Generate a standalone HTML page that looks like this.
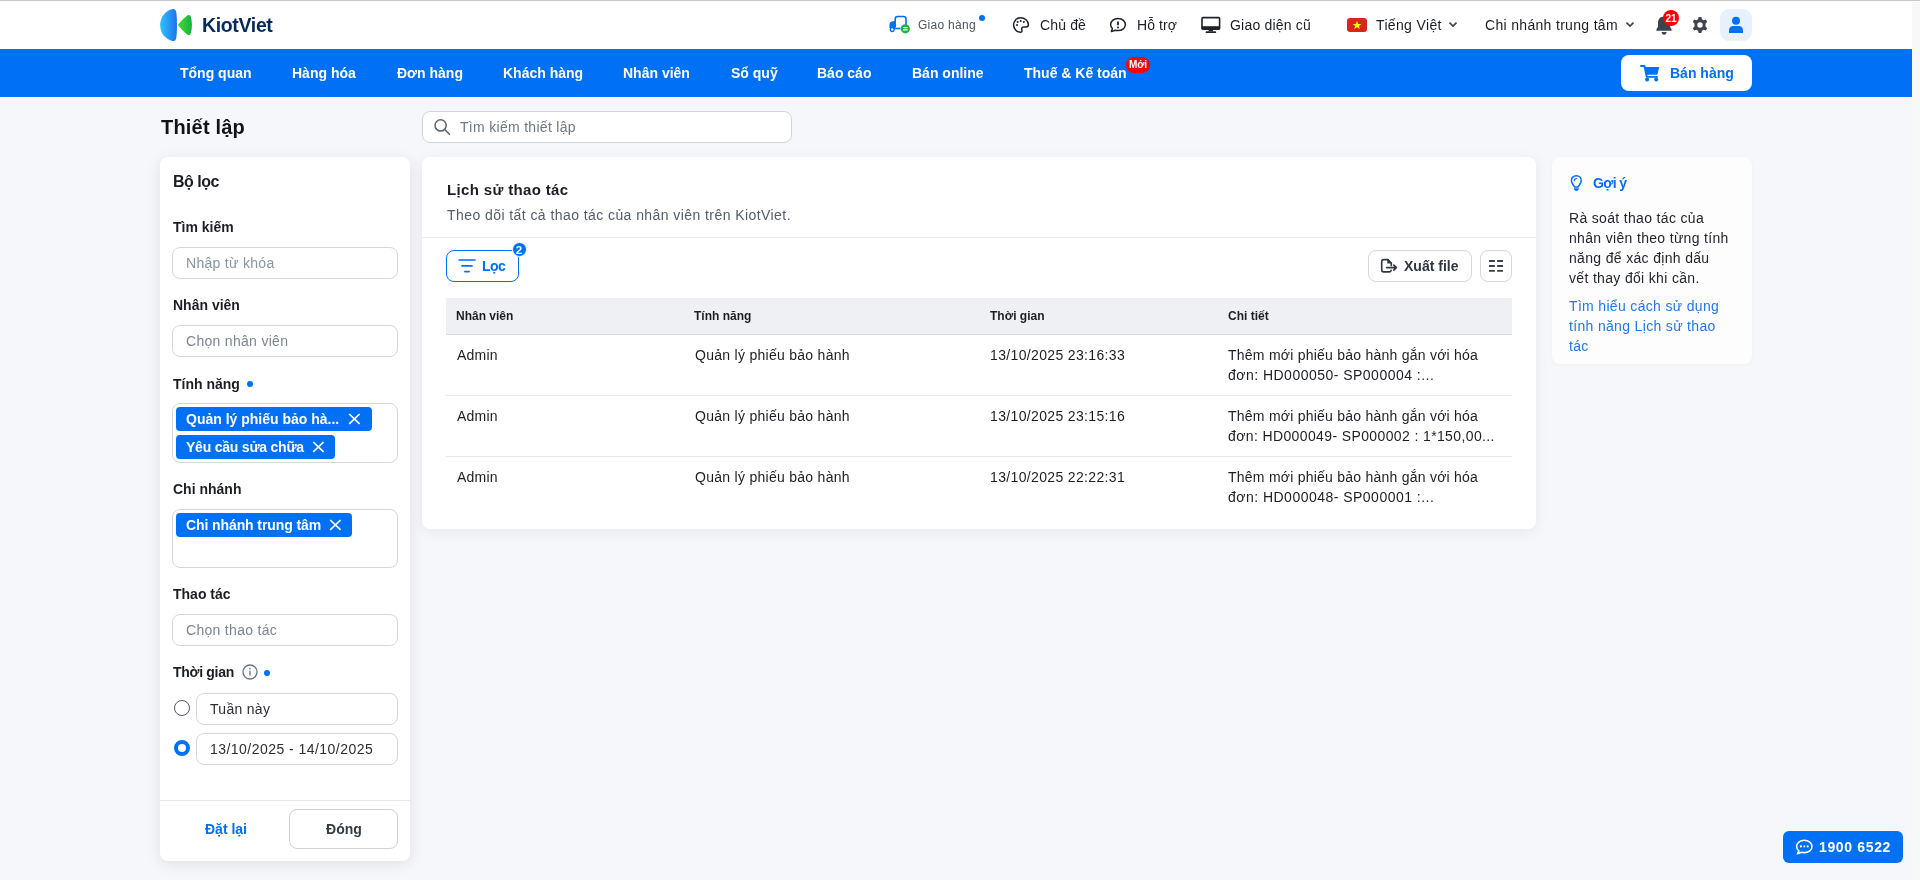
<!DOCTYPE html>
<html lang="vi"><head><meta charset="utf-8"><title>KiotViet - Lịch sử thao tác</title>
<style>
html,body{margin:0;padding:0;width:1920px;height:880px;overflow:hidden;font-family:"Liberation Sans", sans-serif;}
.t{position:absolute;white-space:nowrap;will-change:transform;}
.b{position:absolute;}
</style></head><body>
<div class="b" style="left:0px;top:0px;width:1920px;height:880px;background:#f6f7fa"></div>
<div class="b" style="left:0px;top:0px;width:1920px;height:1px;background:#c8c9c9"></div>
<div class="b" style="left:0px;top:1px;width:1912px;height:48px;background:#ffffff"></div>
<div class="b" style="left:0px;top:49px;width:1912px;height:48px;background:#0070f4"></div>
<div class="b" style="left:1912px;top:1px;width:8px;height:1px;background:#ffffff"></div>
<div class="b" style="left:1912px;top:2px;width:8px;height:878px;background:#f8f8f8"></div>
<svg class="b" style="left:158px;top:7px" width="38" height="36" viewBox="0 0 38 36">
<defs>
<linearGradient id="lgb" x1="0" y1="0" x2="1" y2="0"><stop offset="0" stop-color="#36c2fb"/><stop offset="1" stop-color="#1a73ef"/></linearGradient>
<linearGradient id="lgg" x1="0" y1="0" x2="1" y2="0"><stop offset="0" stop-color="#4ad83a"/><stop offset="1" stop-color="#10b240"/></linearGradient>
</defs>
<path d="M14.5 2 C8 3.5 2.1 9.5 2.1 18 C2.1 26.5 8 32.5 14.5 34 C16.5 34.4 17.6 33.5 18.2 31 C19.2 26 19.2 10 18.2 5 C17.6 2.5 16.5 1.6 14.5 2 Z" fill="url(#lgb)"/>
<path d="M29.2 8.6 C25.5 11.5 22.5 14.8 20.3 17.3 C19.8 17.8 19.8 18.2 20.3 18.7 C22.5 21.2 25.5 24.5 29.2 27.4 C30.8 28.6 32.2 28 32.8 26.2 C34.3 21.5 34.3 14.5 32.8 9.8 C32.2 8 30.8 7.4 29.2 8.6 Z" fill="url(#lgg)"/>
</svg>
<div class="t" style="left:202px;top:14px;font-size:19.5px;line-height:23.4px;font-weight:700;color:#052a5e;letter-spacing:-0.35px;">KiotViet</div>
<svg class="b" style="left:887px;top:14px" width="24" height="20" viewBox="0 0 24 20">
<path d="M8.2 13.5 V5 Q8.2 2.5 10.7 2.5 H16.5 Q19 2.5 19 5 V11" fill="none" stroke="#0070f4" stroke-width="1.6"/>
<path d="M2.5 14 V10.2 Q2.5 8 4.5 7.5 L8.2 7 V15.5 H5" fill="#0070f4"/>
<circle cx="5.2" cy="15.6" r="1.9" fill="#fff" stroke="#0070f4" stroke-width="1.3"/>
<path d="M8.2 14.5 H13.5" stroke="#0070f4" stroke-width="1.6"/>
<circle cx="18.3" cy="14.8" r="4.6" fill="#1db440"/>
<path d="M16 13.6 H20.6 M16 15.9 H20.6" stroke="#fff" stroke-width="1.2"/>
</svg>
<div class="t" style="left:918px;top:18px;font-size:12px;line-height:14.4px;font-weight:400;color:#4d5562;letter-spacing:0.28px;">Giao hàng</div>
<div class="b" style="left:979px;top:15px;width:6px;height:6px;background:#0070f4;border-radius:50%"></div>
<svg class="b" style="left:1011px;top:15px" width="20" height="20" viewBox="0 0 20 20">
<path d="M9.6 2.8 C5.4 2.8 2.6 6 2.6 10 C2.6 14 5.6 17 9.4 17.2 C10.8 17.2 11.3 16.3 10.9 15.1 C10.5 13.9 10.6 11.9 12.4 11.9 H15.2 C16.6 11.9 17.4 11 17.4 9.8 C17.4 5.6 13.8 2.8 9.6 2.8 Z" fill="none" stroke="#1f2329" stroke-width="1.5"/>
<circle cx="6.6" cy="7" r="1" fill="#1f2329"/><circle cx="9.7" cy="6" r="1" fill="#1f2329"/><circle cx="12.8" cy="7" r="1" fill="#1f2329"/><circle cx="6" cy="9.9" r="1" fill="#1f2329"/>
</svg>
<div class="t" style="left:1040px;top:17px;font-size:14px;line-height:16.8px;font-weight:400;color:#1b1f24;letter-spacing:0.15px;">Chủ đề</div>
<svg class="b" style="left:1108px;top:15px" width="20" height="20" viewBox="0 0 20 20">
<path d="M10 3.6 C5.6 3.6 2.6 6.3 2.6 9.6 C2.6 11.2 3.3 12.5 4.4 13.5 L3.4 16.6 L7.2 15.2 C8.1 15.5 9 15.6 10 15.6 C14.4 15.6 17.4 12.9 17.4 9.6 C17.4 6.3 14.4 3.6 10 3.6 Z" fill="none" stroke="#1f2329" stroke-width="1.5" stroke-linejoin="round"/>
<path d="M10 6.5 V10.3" stroke="#1f2329" stroke-width="1.8"/><circle cx="10" cy="12.4" r="1" fill="#1f2329"/>
</svg>
<div class="t" style="left:1137px;top:17px;font-size:14px;line-height:16.8px;font-weight:400;color:#1b1f24;letter-spacing:0.1px;">Hỗ trợ</div>
<svg class="b" style="left:1200px;top:15px" width="22" height="20" viewBox="0 0 22 20">
<rect x="2" y="2.6" width="17.6" height="11.6" rx="1" fill="none" stroke="#1f2329" stroke-width="1.6"/>
<rect x="1.6" y="11.2" width="18.4" height="3" fill="#1f2329"/>
<path d="M9 14 L8.4 16.2 H13.2 L12.6 14 Z" fill="#1f2329"/>
<rect x="5.6" y="16.3" width="10.6" height="1.8" rx="0.9" fill="#1f2329"/>
</svg>
<div class="t" style="left:1230px;top:17px;font-size:14px;line-height:16.8px;font-weight:400;color:#1b1f24;letter-spacing:0.2px;">Giao diện cũ</div>
<div class="b" style="left:1347px;top:18px;width:20px;height:14px;background:#da251d;border-radius:3px"></div>
<svg class="b" style="left:1352px;top:20px" width="10" height="10" viewBox="0 0 10 10"><polygon points="5,1 6.2,4 9.3,4.1 6.9,6 7.8,9 5,7.3 2.2,9 3.1,6 0.7,4.1 3.8,4" fill="#ffff00"/></svg>
<div class="t" style="left:1375.5px;top:17px;font-size:14px;line-height:16.8px;font-weight:400;color:#1b1f24;letter-spacing:0.35px;">Tiếng Việt</div>
<svg class="b" style="left:1447px;top:20px" width="12" height="9" viewBox="0 0 12 9"><path d="M2.5 2.6 L6 6 L9.5 2.6" fill="none" stroke="#3d4450" stroke-width="1.7"/></svg>
<div class="t" style="left:1484.7px;top:17px;font-size:14px;line-height:16.8px;font-weight:400;color:#1b1f24;letter-spacing:0.32px;">Chi nhánh trung tâm</div>
<svg class="b" style="left:1624px;top:20px" width="12" height="9" viewBox="0 0 12 9"><path d="M2.5 2.6 L6 6 L9.5 2.6" fill="none" stroke="#3d4450" stroke-width="1.7"/></svg>
<svg class="b" style="left:1654px;top:14px" width="20" height="24" viewBox="0 0 20 24">
<path d="M10 2.4 C6.2 2.4 4 5.2 4 8.8 V12.6 L2.4 15.4 C2.1 16.1 2.5 16.7 3.2 16.7 H16.8 C17.5 16.7 17.9 16.1 17.6 15.4 L16 12.6 V8.8 C16 5.2 13.8 2.4 10 2.4 Z" fill="#3d4450"/>
<path d="M7.6 18 H12.6 C12.6 19.6 11.5 20.7 10.1 20.7 C8.7 20.7 7.6 19.6 7.6 18 Z" fill="#3d4450"/>
</svg>
<div class="b" style="left:1663px;top:10px;width:16px;height:16px;background:#ff0000;border-radius:50%"></div>
<div class="t" style="left:1661.0px;width:20px;text-align:center;top:13px;font-size:10px;line-height:12.0px;font-weight:700;color:#ffffff;letter-spacing:0px">21</div>
<svg class="b" style="left:1690px;top:15px" width="20" height="20" viewBox="0 0 20 20">
<path fill="#3d4450" fill-rule="evenodd" d="M8.6 2 H11.4 L11.9 4.3 L13.6 5.2 L15.8 4.4 L17.2 6.8 L15.5 8.4 V11.6 L17.2 13.2 L15.8 15.6 L13.6 14.8 L11.9 15.7 L11.4 18 H8.6 L8.1 15.7 L6.4 14.8 L4.2 15.6 L2.8 13.2 L4.5 11.6 V8.4 L2.8 6.8 L4.2 4.4 L6.4 5.2 L8.1 4.3 Z M10 7.3 A2.7 2.7 0 1 0 10 12.7 A2.7 2.7 0 1 0 10 7.3 Z"/>
</svg>
<div class="b" style="left:1720px;top:9px;width:32px;height:32px;background:#e7f1fd;border-radius:9px"></div>
<svg class="b" style="left:1726px;top:15px" width="20" height="20" viewBox="0 0 20 20">
<circle cx="10" cy="5.8" r="4" fill="#0070f4"/>
<path d="M3 18 V15.2 C3 12.6 5 11 7.4 11 H12.6 C15 11 17 12.6 17 15.2 V18 Z" fill="#0070f4"/>
</svg>
<div class="t" style="left:180.4px;top:65px;font-size:14px;line-height:16.8px;font-weight:700;color:#ffffff;letter-spacing:0px;">Tổng quan</div>
<div class="t" style="left:291.9px;top:65px;font-size:14px;line-height:16.8px;font-weight:700;color:#ffffff;letter-spacing:0px;">Hàng hóa</div>
<div class="t" style="left:397.2px;top:65px;font-size:14px;line-height:16.8px;font-weight:700;color:#ffffff;letter-spacing:0px;">Đơn hàng</div>
<div class="t" style="left:502.6px;top:65px;font-size:14px;line-height:16.8px;font-weight:700;color:#ffffff;letter-spacing:0px;">Khách hàng</div>
<div class="t" style="left:623.4px;top:65px;font-size:14px;line-height:16.8px;font-weight:700;color:#ffffff;letter-spacing:0px;">Nhân viên</div>
<div class="t" style="left:730.6px;top:65px;font-size:14px;line-height:16.8px;font-weight:700;color:#ffffff;letter-spacing:0px;">Sổ quỹ</div>
<div class="t" style="left:817.2px;top:65px;font-size:14px;line-height:16.8px;font-weight:700;color:#ffffff;letter-spacing:0px;">Báo cáo</div>
<div class="t" style="left:911.6px;top:65px;font-size:14px;line-height:16.8px;font-weight:700;color:#ffffff;letter-spacing:0px;">Bán online</div>
<div class="t" style="left:1023.5px;top:65px;font-size:14px;line-height:16.8px;font-weight:700;color:#ffffff;letter-spacing:0px;">Thuế &amp; Kế toán</div>
<div class="b" style="left:1126px;top:57px;width:24px;height:16px;background:#fa0505;border-radius:8px"></div>
<div class="t" style="left:1123.4px;width:30px;text-align:center;top:59px;font-size:10px;line-height:12.0px;font-weight:700;color:#ffffff;letter-spacing:-0.1px">Mới</div>
<div class="b" style="left:1621px;top:55px;width:131px;height:36px;background:#ffffff;border-radius:8px"></div>
<svg class="b" style="left:1639px;top:63px" width="22" height="20" viewBox="0 0 22 20">
<path d="M2 3 H5.4 L7.8 13.9 H18" fill="none" stroke="#0070f4" stroke-width="1.9" stroke-linejoin="round" stroke-linecap="round"/>
<path d="M6.2 4 H20.2 L18.4 11.8 H7.6 Z" fill="#0070f4"/>
<circle cx="8.1" cy="16.4" r="2" fill="#0070f4"/><circle cx="17.2" cy="16.4" r="2" fill="#0070f4"/>
</svg>
<div class="t" style="left:1669.5px;top:65px;font-size:14px;line-height:16.8px;font-weight:700;color:#0070f4;letter-spacing:0px;">Bán hàng</div>
<div class="t" style="left:160.8px;top:115px;font-size:20px;line-height:24.0px;font-weight:700;color:#101418;letter-spacing:0.2px;">Thiết lập</div>
<div class="b" style="left:422px;top:111px;width:370px;height:32px;background:#fff;border:1px solid #d0d5dc;border-radius:8px;box-sizing:border-box"></div>
<svg class="b" style="left:432px;top:117px" width="20" height="20" viewBox="0 0 20 20"><circle cx="8.6" cy="8.4" r="5.6" fill="none" stroke="#5b6573" stroke-width="1.5"/><path d="M12.7 12.5 L17.5 17.3" stroke="#5b6573" stroke-width="1.5" stroke-linecap="round"/></svg>
<div class="t" style="left:459.5px;top:119px;font-size:14px;line-height:16.8px;font-weight:400;color:#6f7885;letter-spacing:0.3px;">Tìm kiếm thiết lập</div>
<div class="b" style="left:160px;top:157px;width:250px;height:704px;background:#fff;border-radius:8px;box-shadow:0 3px 14px rgba(20,30,50,0.10)"></div>
<div class="t" style="left:172.5px;top:172px;font-size:16px;line-height:19.2px;font-weight:700;color:#1b1f24;letter-spacing:-0.5px;">Bộ lọc</div>
<div class="t" style="left:172.5px;top:219px;font-size:14px;line-height:16.8px;font-weight:700;color:#1b1f24;letter-spacing:0px;">Tìm kiếm</div>
<div class="b" style="left:172px;top:247px;width:226px;height:32px;border:1px solid #d3d8df;border-radius:8px;box-sizing:border-box;background:#fff"></div>
<div class="t" style="left:185.7px;top:255px;font-size:14px;line-height:16.8px;font-weight:400;color:#8a94a2;letter-spacing:0.3px;">Nhập từ khóa</div>
<div class="t" style="left:172.5px;top:297px;font-size:14px;line-height:16.8px;font-weight:700;color:#1b1f24;letter-spacing:0px;">Nhân viên</div>
<div class="b" style="left:172px;top:325px;width:226px;height:32px;border:1px solid #d3d8df;border-radius:8px;box-sizing:border-box;background:#fff"></div>
<div class="t" style="left:185.7px;top:333px;font-size:14px;line-height:16.8px;font-weight:400;color:#7d8591;letter-spacing:0.3px;">Chọn nhân viên</div>
<div class="t" style="left:172.5px;top:376px;font-size:14px;line-height:16.8px;font-weight:700;color:#1b1f24;letter-spacing:0px;">Tính năng</div>
<div class="b" style="left:247px;top:381px;width:6px;height:6px;background:#0070f4;border-radius:50%"></div>
<div class="b" style="left:172px;top:403px;width:226px;height:60px;border:1px solid #d3d8df;border-radius:8px;box-sizing:border-box;background:#fff"></div>
<div class="b" style="left:176px;top:407px;width:196px;height:24px;background:#0070f4;border-radius:4px"></div>
<div class="t" style="left:186px;top:411px;font-size:14px;line-height:16.8px;font-weight:700;color:#ffffff;letter-spacing:0px;">Quản lý phiếu bảo hà...</div>
<svg class="b" style="left:347px;top:412px" width="14" height="14" viewBox="0 0 14 14"><path d="M2.2 2 L12.6 11.9 M12.6 2 L2.2 11.9" stroke="#fff" stroke-width="1.7"/></svg>
<div class="b" style="left:176px;top:435px;width:159px;height:24px;background:#0070f4;border-radius:4px"></div>
<div class="t" style="left:186px;top:439px;font-size:14px;line-height:16.8px;font-weight:700;color:#ffffff;letter-spacing:-0.22px;">Yêu cầu sửa chữa</div>
<svg class="b" style="left:310.5px;top:440px" width="14" height="14" viewBox="0 0 14 14"><path d="M2.2 2 L12.6 11.9 M12.6 2 L2.2 11.9" stroke="#fff" stroke-width="1.7"/></svg>
<div class="t" style="left:172.5px;top:481px;font-size:14px;line-height:16.8px;font-weight:700;color:#1b1f24;letter-spacing:0px;">Chi nhánh</div>
<div class="b" style="left:172px;top:509px;width:226px;height:59px;border:1px solid #d3d8df;border-radius:8px;box-sizing:border-box;background:#fff"></div>
<div class="b" style="left:176px;top:513px;width:176px;height:24px;background:#0070f4;border-radius:4px"></div>
<div class="t" style="left:186px;top:517px;font-size:14px;line-height:16.8px;font-weight:700;color:#ffffff;letter-spacing:-0.1px;">Chi nhánh trung tâm</div>
<svg class="b" style="left:328px;top:518px" width="14" height="14" viewBox="0 0 14 14"><path d="M2.2 2 L12.6 11.9 M12.6 2 L2.2 11.9" stroke="#fff" stroke-width="1.7"/></svg>
<div class="t" style="left:172.5px;top:586px;font-size:14px;line-height:16.8px;font-weight:700;color:#1b1f24;letter-spacing:0px;">Thao tác</div>
<div class="b" style="left:172px;top:614px;width:226px;height:32px;border:1px solid #d3d8df;border-radius:8px;box-sizing:border-box;background:#fff"></div>
<div class="t" style="left:185.7px;top:622px;font-size:14px;line-height:16.8px;font-weight:400;color:#7d8591;letter-spacing:0.3px;">Chọn thao tác</div>
<div class="t" style="left:172.5px;top:664px;font-size:14px;line-height:16.8px;font-weight:700;color:#1b1f24;letter-spacing:-0.3px;">Thời gian</div>
<svg class="b" style="left:242px;top:664px" width="16" height="16" viewBox="0 0 16 16"><circle cx="8" cy="8" r="7" fill="none" stroke="#6b7788" stroke-width="1.3"/><path d="M8 6.8 V11.6" stroke="#6b7788" stroke-width="1.4"/><circle cx="8" cy="4.6" r="0.85" fill="#6b7788"/></svg>
<div class="b" style="left:264px;top:670px;width:6px;height:6px;background:#0070f4;border-radius:50%"></div>
<div class="b" style="left:174px;top:700px;width:16px;height:16px;border:1.3px solid #4d5766;border-radius:50%;box-sizing:border-box;background:#fff"></div>
<div class="b" style="left:196px;top:693px;width:202px;height:32px;border:1px solid #d3d8df;border-radius:8px;box-sizing:border-box;background:#fff"></div>
<div class="t" style="left:210px;top:701px;font-size:14px;line-height:16.8px;font-weight:400;color:#2a2f36;letter-spacing:0.3px;">Tuần này</div>
<div class="b" style="left:174px;top:740px;width:16px;height:16px;border:4px solid #0070f4;border-radius:50%;box-sizing:border-box;background:#fff"></div>
<div class="b" style="left:196px;top:733px;width:202px;height:32px;border:1px solid #d3d8df;border-radius:8px;box-sizing:border-box;background:#fff"></div>
<div class="t" style="left:210px;top:741px;font-size:14px;line-height:16.8px;font-weight:400;color:#2a2f36;letter-spacing:0.46px;">13/10/2025 - 14/10/2025</div>
<div class="b" style="left:160px;top:800px;width:250px;height:1px;background:#e6e8ec"></div>
<div class="t" style="left:205.4px;top:821px;font-size:14px;line-height:16.8px;font-weight:700;color:#0070f4;letter-spacing:0px;">Đặt lại</div>
<div class="b" style="left:289px;top:809px;width:109px;height:40px;border:1px solid #cdd2d9;border-radius:8px;box-sizing:border-box;background:#fff"></div>
<div class="t" style="left:293.5px;width:100px;text-align:center;top:821px;font-size:14px;line-height:16.8px;font-weight:700;color:#353b44;letter-spacing:0px">Đóng</div>
<div class="b" style="left:422px;top:157px;width:1114px;height:372px;background:#fff;border-radius:8px;box-shadow:0 3px 14px rgba(20,30,50,0.07)"></div>
<div class="t" style="left:446.8px;top:181px;font-size:15px;line-height:18.0px;font-weight:700;color:#1b1f24;letter-spacing:0.35px;">Lịch sử thao tác</div>
<div class="t" style="left:446.5px;top:207px;font-size:14px;line-height:16.8px;font-weight:400;color:#545c68;letter-spacing:0.43px;">Theo dõi tất cả thao tác của nhân viên trên KiotViet.</div>
<div class="b" style="left:422px;top:237px;width:1114px;height:1px;background:#e8eaee"></div>
<div class="b" style="left:446px;top:250px;width:73px;height:32px;border:1px solid #0070f4;border-radius:8px;box-sizing:border-box"></div>
<svg class="b" style="left:457px;top:256px" width="20" height="20" viewBox="0 0 20 20"><path d="M2 4 H18 M5 9.9 H15 M7.8 15.6 H12.2" stroke="#0070f4" stroke-width="1.6" stroke-linecap="round"/></svg>
<div class="t" style="left:482px;top:258px;font-size:14px;line-height:16.8px;font-weight:700;color:#0070f4;letter-spacing:-0.5px;">Lọc</div>
<div class="b" style="left:511.5px;top:242px;width:15.0px;height:15px;background:#0070f4;border:1.5px solid #fff;border-radius:50%;box-sizing:border-box"></div>
<div class="t" style="left:511.0px;width:16px;text-align:center;top:244px;font-size:11.5px;line-height:13.8px;font-weight:700;color:#fff;letter-spacing:0px">2</div>
<div class="b" style="left:1368px;top:250px;width:104px;height:32px;border:1px solid #d3d7de;border-radius:8px;box-sizing:border-box"></div>
<svg class="b" style="left:1378px;top:256px" width="22" height="20" viewBox="0 0 22 20">
<path d="M9.9 3.6 H5.6 Q3.7 3.6 3.7 5.5 V14 Q3.7 15.9 5.6 15.9 H11.2 Q12.9 15.9 13.1 14.3" fill="none" stroke="#2f3640" stroke-width="1.6" stroke-linecap="round"/>
<path d="M9.9 3.6 L13.3 7 V9.6" fill="none" stroke="#2f3640" stroke-width="1.6" stroke-linecap="round"/>
<path d="M10.1 3.8 V6.8 H13.1" fill="none" stroke="#2f3640" stroke-width="1.6"/>
<path d="M8.6 11.6 H18.2 M15.8 9.1 L18.4 11.6 L15.8 14.1" fill="none" stroke="#2f3640" stroke-width="1.6" stroke-linecap="round" stroke-linejoin="round"/>
</svg>
<div class="t" style="left:1403.75px;top:258px;font-size:14px;line-height:16.8px;font-weight:700;color:#2f3640;letter-spacing:0px;">Xuất file</div>
<div class="b" style="left:1480px;top:250px;width:32px;height:32px;border:1px solid #d3d7de;border-radius:8px;box-sizing:border-box"></div>
<svg class="b" style="left:1486px;top:256px" width="20" height="20" viewBox="0 0 20 20"><path d="M3 5 H8.9 M3 10 H8.9 M3 14.9 H8.9 M11.1 5 H17 M11.1 10 H17 M11.1 14.9 H17" stroke="#3a414c" stroke-width="1.9"/></svg>
<div class="b" style="left:446px;top:298px;width:1066px;height:37px;background:#eff0f3;border-bottom:1px solid #d6d9df;box-sizing:border-box"></div>
<div class="t" style="left:456px;top:309px;font-size:12px;line-height:14.4px;font-weight:700;color:#1b1f24;letter-spacing:0px;">Nhân viên</div>
<div class="t" style="left:694px;top:309px;font-size:12px;line-height:14.4px;font-weight:700;color:#1b1f24;letter-spacing:0px;">Tính năng</div>
<div class="t" style="left:990px;top:309px;font-size:12px;line-height:14.4px;font-weight:700;color:#1b1f24;letter-spacing:0px;">Thời gian</div>
<div class="t" style="left:1228px;top:309px;font-size:12px;line-height:14.4px;font-weight:700;color:#1b1f24;letter-spacing:0px;">Chi tiết</div>
<div class="t" style="left:456.5px;top:347px;font-size:14px;line-height:16.8px;font-weight:400;color:#1b1f24;letter-spacing:0.2px;">Admin</div>
<div class="t" style="left:694.5px;top:347px;font-size:14px;line-height:16.8px;font-weight:400;color:#1b1f24;letter-spacing:0.28px;">Quản lý phiếu bảo hành</div>
<div class="t" style="left:990px;top:347px;font-size:14px;line-height:16.8px;font-weight:400;color:#1b1f24;letter-spacing:0.35px;">13/10/2025 23:16:33</div>
<div class="t" style="left:1228px;top:347px;font-size:14px;line-height:16.8px;font-weight:400;color:#1b1f24;letter-spacing:0.24px;">Thêm mới phiếu bảo hành gắn với hóa</div>
<div class="t" style="left:1228px;top:367px;font-size:14px;line-height:16.8px;font-weight:400;color:#1b1f24;letter-spacing:0.48px;">đơn: HD000050- SP000004 :...</div>
<div class="b" style="left:446px;top:395px;width:1066px;height:1px;background:#e6e8ec"></div>
<div class="t" style="left:456.5px;top:408px;font-size:14px;line-height:16.8px;font-weight:400;color:#1b1f24;letter-spacing:0.2px;">Admin</div>
<div class="t" style="left:694.5px;top:408px;font-size:14px;line-height:16.8px;font-weight:400;color:#1b1f24;letter-spacing:0.28px;">Quản lý phiếu bảo hành</div>
<div class="t" style="left:990px;top:408px;font-size:14px;line-height:16.8px;font-weight:400;color:#1b1f24;letter-spacing:0.35px;">13/10/2025 23:15:16</div>
<div class="t" style="left:1228px;top:408px;font-size:14px;line-height:16.8px;font-weight:400;color:#1b1f24;letter-spacing:0.24px;">Thêm mới phiếu bảo hành gắn với hóa</div>
<div class="t" style="left:1228px;top:428px;font-size:14px;line-height:16.8px;font-weight:400;color:#1b1f24;letter-spacing:0.38px;">đơn: HD000049- SP000002 : 1*150,00...</div>
<div class="b" style="left:446px;top:456px;width:1066px;height:1px;background:#e6e8ec"></div>
<div class="t" style="left:456.5px;top:469px;font-size:14px;line-height:16.8px;font-weight:400;color:#1b1f24;letter-spacing:0.2px;">Admin</div>
<div class="t" style="left:694.5px;top:469px;font-size:14px;line-height:16.8px;font-weight:400;color:#1b1f24;letter-spacing:0.28px;">Quản lý phiếu bảo hành</div>
<div class="t" style="left:990px;top:469px;font-size:14px;line-height:16.8px;font-weight:400;color:#1b1f24;letter-spacing:0.35px;">13/10/2025 22:22:31</div>
<div class="t" style="left:1228px;top:469px;font-size:14px;line-height:16.8px;font-weight:400;color:#1b1f24;letter-spacing:0.24px;">Thêm mới phiếu bảo hành gắn với hóa</div>
<div class="t" style="left:1228px;top:489px;font-size:14px;line-height:16.8px;font-weight:400;color:#1b1f24;letter-spacing:0.48px;">đơn: HD000048- SP000001 :...</div>
<div class="b" style="left:1552px;top:157px;width:200px;height:207px;background:#fdfdfe;border-radius:8px;box-shadow:0 1px 4px rgba(20,30,50,0.03)"></div>
<svg class="b" style="left:1568px;top:174px" width="16" height="18" viewBox="0 0 16 18">
<path d="M8.3 1.7 C5.3 1.7 3.4 3.9 3.4 6.6 C3.4 8.4 4.3 9.7 5.2 11 C5.9 12 6.4 12.5 6.8 13.1 H9.9 C10.3 12.5 10.8 12 11.5 11 C12.4 9.7 13.2 8.4 13.2 6.6 C13.2 3.9 11.3 1.7 8.3 1.7 Z" fill="none" stroke="#0070f4" stroke-width="1.5" stroke-linejoin="round"/>
<path d="M8.6 4.5 C7.3 4.5 6.3 5.4 6.2 6.6" fill="none" stroke="#0070f4" stroke-width="1.2" stroke-linecap="round"/>
<path d="M5.8 14.3 H10.9 C10.7 16 9.6 17 8.35 17 C7.1 17 6 16 5.8 14.3 Z" fill="#0070f4"/>
</svg>
<div class="t" style="left:1592.7px;top:175px;font-size:14px;line-height:16.8px;font-weight:700;color:#0070f4;letter-spacing:-0.6px;">Gợi ý</div>
<div class="t" style="left:1568.8px;top:210px;font-size:14px;line-height:16.8px;font-weight:400;color:#22272e;letter-spacing:0.33px;">Rà soát thao tác của</div>
<div class="t" style="left:1568.8px;top:230px;font-size:14px;line-height:16.8px;font-weight:400;color:#22272e;letter-spacing:0.33px;">nhân viên theo từng tính</div>
<div class="t" style="left:1568.8px;top:250px;font-size:14px;line-height:16.8px;font-weight:400;color:#22272e;letter-spacing:0.33px;">năng để xác định dấu</div>
<div class="t" style="left:1568.8px;top:270px;font-size:14px;line-height:16.8px;font-weight:400;color:#22272e;letter-spacing:0.33px;">vết thay đổi khi cần.</div>
<div class="t" style="left:1568.8px;top:298px;font-size:14px;line-height:16.8px;font-weight:400;color:#1f78f0;letter-spacing:0.33px;">Tìm hiểu cách sử dụng</div>
<div class="t" style="left:1568.8px;top:318px;font-size:14px;line-height:16.8px;font-weight:400;color:#1f78f0;letter-spacing:0.33px;">tính năng Lịch sử thao</div>
<div class="t" style="left:1568.8px;top:338px;font-size:14px;line-height:16.8px;font-weight:400;color:#1f78f0;letter-spacing:0.33px;">tác</div>
<div class="b" style="left:1783px;top:831px;width:120px;height:32px;background:#0070f4;border-radius:6px"></div>
<svg class="b" style="left:1793.5px;top:838px" width="20" height="18" viewBox="0 0 20 18">
<path d="M10.3 2.2 C5.9 2.2 2.6 5 2.6 8.4 C2.6 10.2 3.5 11.7 4.9 12.8 L3.4 15.8 L7.6 14.2 C8.5 14.5 9.4 14.6 10.3 14.6 C14.7 14.6 18 11.8 18 8.4 C18 5 14.7 2.2 10.3 2.2 Z" fill="none" stroke="#fff" stroke-width="1.6" stroke-linejoin="round"/>
<circle cx="6.9" cy="8.4" r="1.05" fill="#fff"/><circle cx="10.3" cy="8.4" r="1.05" fill="#fff"/><circle cx="13.7" cy="8.4" r="1.05" fill="#fff"/>
</svg>
<div class="t" style="left:1818.5px;top:839px;font-size:14px;line-height:16.8px;font-weight:700;color:#ffffff;letter-spacing:0.65px;">1900 6522</div>
</body></html>
